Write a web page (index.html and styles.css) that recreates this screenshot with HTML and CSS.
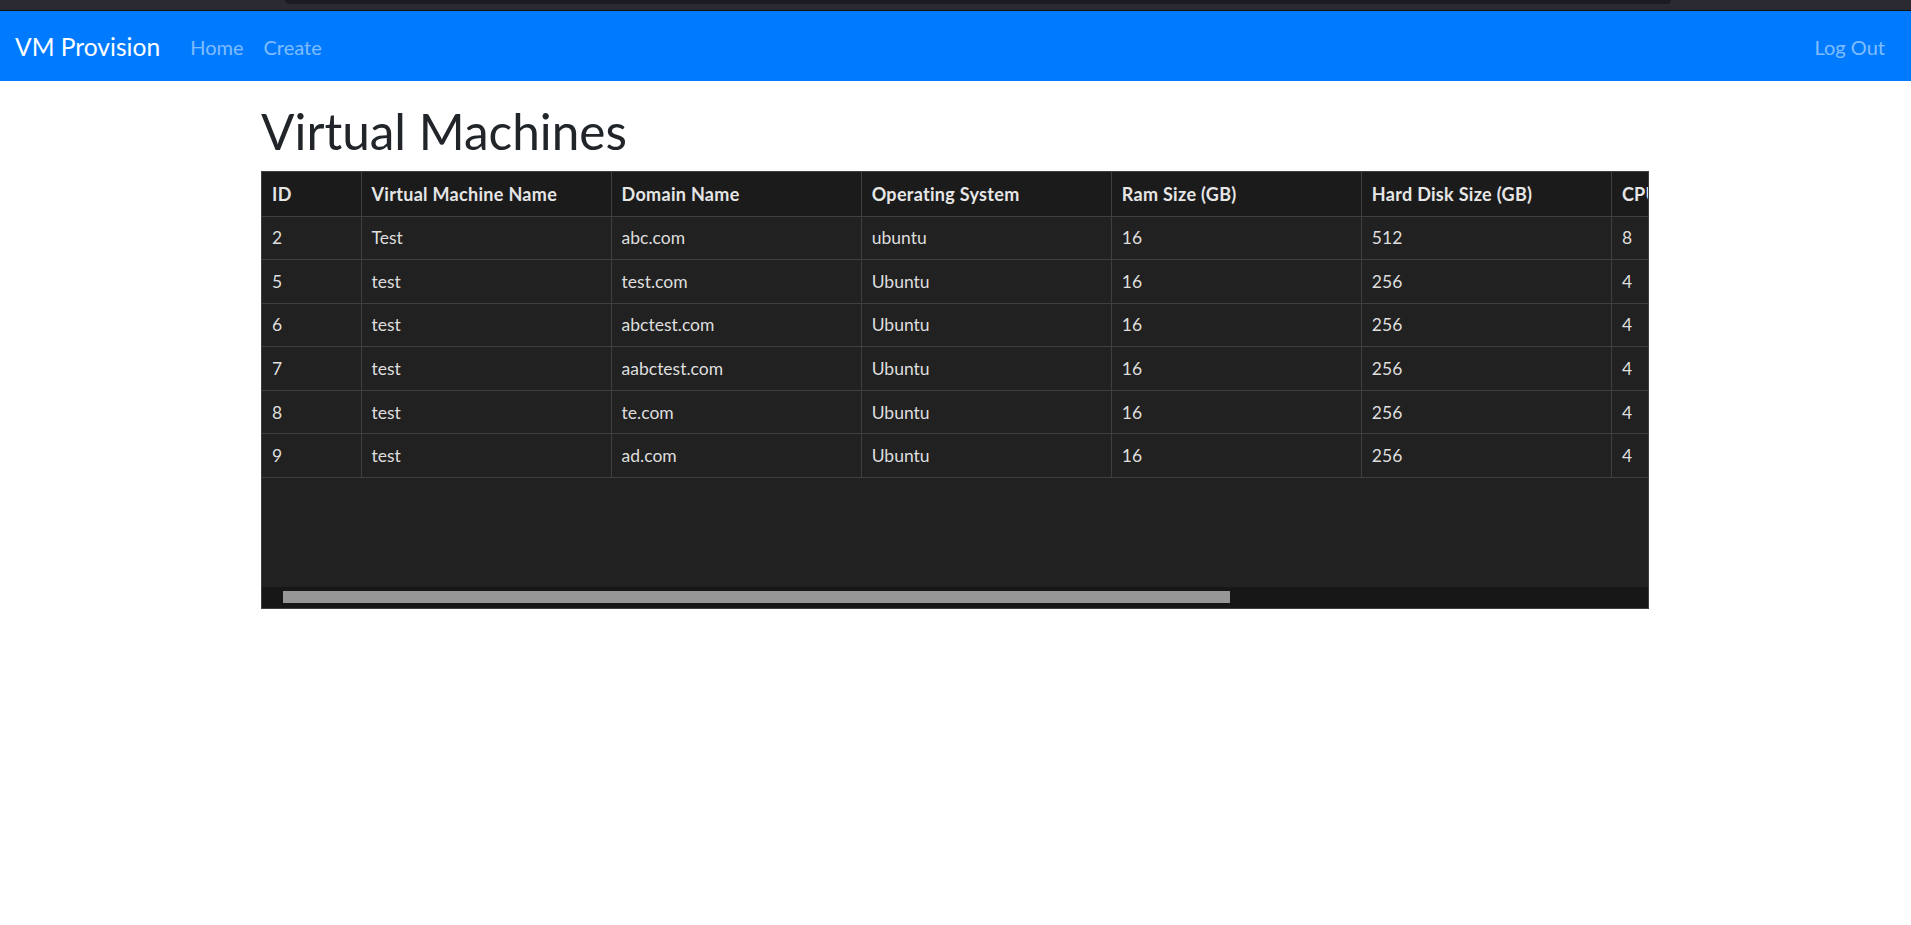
FILE: index.html
```html
<!DOCTYPE html>
<html lang="en">
<head>
<meta charset="utf-8">
<title>VM Provision</title>
<link rel="stylesheet" href="styles.css">
</head>
<body>
<div class="chrome"><div class="chrome-tab"></div></div>
<nav class="navbar">
  <a class="brand" href="#">VM Provision</a>
  <ul class="nav">
    <li><a class="nav-link" href="#">Home</a></li>
    <li><a class="nav-link" href="#">Create</a></li>
  </ul>
  <ul class="nav nav-right">
    <li><a class="nav-link" href="#">Log Out</a></li>
  </ul>
</nav>
<div class="page">
<main class="container">
  <h1 class="title">Virtual Machines</h1>
  <div class="table-wrap">
    <div class="table-view">
      <table class="vm-table">
        <colgroup>
          <col class="c-id"><col class="c-w"><col class="c-w"><col class="c-w"><col class="c-w"><col class="c-w"><col class="c-w">
        </colgroup>
        <thead>
          <tr><th>ID</th><th>Virtual Machine Name</th><th>Domain Name</th><th>Operating System</th><th>Ram Size (GB)</th><th>Hard Disk Size (GB)</th><th>CPU</th></tr>
        </thead>
        <tbody>
          <tr><td>2</td><td>Test</td><td>abc.com</td><td>ubuntu</td><td>16</td><td>512</td><td>8</td></tr>
          <tr><td>5</td><td>test</td><td>test.com</td><td>Ubuntu</td><td>16</td><td>256</td><td>4</td></tr>
          <tr><td>6</td><td>test</td><td>abctest.com</td><td>Ubuntu</td><td>16</td><td>256</td><td>4</td></tr>
          <tr><td>7</td><td>test</td><td>aabctest.com</td><td>Ubuntu</td><td>16</td><td>256</td><td>4</td></tr>
          <tr><td>8</td><td>test</td><td>te.com</td><td>Ubuntu</td><td>16</td><td>256</td><td>4</td></tr>
          <tr><td>9</td><td>test</td><td>ad.com</td><td>Ubuntu</td><td>16</td><td>256</td><td>4</td></tr>
        </tbody>
      </table>
    </div>
    <div class="scrollbar"><div class="thumb"></div></div>
  </div>
</main>
</div>
</body>
</html>
```

FILE: styles.css
```css
* { box-sizing: border-box; }
html, body { margin: 0; padding: 0; }
body {
  font-family: Lato, "Open Sans", "Noto Sans", sans-serif;
  font-size: 20px;
  line-height: 1.5;
  color: #212529;
  background: #fff;
}
.chrome {
  height: 11px;
  background: #2b2a33;
  border-bottom: 1px solid #111114;
  padding-left: 285px;
}
.chrome-tab {
  width: 1386px;
  height: 4px;
  background: #1c1b22;
  border-radius: 0 0 4px 4px;
}
.navbar {
  display: flex;
  align-items: center;
  height: 70px;
  background: #007bff;
  padding: 0 16px 0 15px;
}
.brand {
  color: #fff;
  text-decoration: none;
  font-size: 24.6px;
  line-height: 1.5;
  margin-right: 20px;
  padding-top: 2px;
}
.nav {
  list-style: none;
  margin: 0;
  padding: 0;
  display: flex;
  padding-top: 2px;
}
.nav-right { margin-left: auto; }
.nav-link {
  display: block;
  padding: 0 10px;
  color: rgba(255,255,255,.5);
  text-decoration: none;
  font-size: 20px;
}
.page {
  padding-right: 1px;
}
.container {
  width: 1388px;
  margin: 0 auto;
}
.title {
  font-size: 49.5px;
  font-weight: 400;
  line-height: 60px;
  margin: 20px 0 10px;
  color: #212529;
}
.table-wrap {
  border: 1px solid #3f3f3f;
  background: #212121;
}
.table-view {
  height: 415px;
  overflow: hidden;
}
.vm-table {
  border-collapse: collapse;
  table-layout: fixed;
  width: 1600px;
  font-size: 17.5px;
  color: #dedede;
}
.c-id { width: 99px; }
.c-w { width: 250px; }
.vm-table th, .vm-table td {
  text-align: left;
  padding: 1px 10px 0;
  border-right: 1px solid #3f3f3f;
  border-bottom: 1px solid #3f3f3f;
  vertical-align: middle;
  white-space: nowrap;
}
.vm-table th {
  height: 44px;
  background: #1b1b1b;
  font-size: 18px;
  letter-spacing: 0.3px;
  font-weight: 700;
  color: #e6e6e6;
}
.vm-table td {
  height: 43.6px;
  background: #212121;
}
.scrollbar {
  height: 21px;
  background: #171717;
  padding: 4px 0 0 21px;
}
.thumb {
  width: 947px;
  height: 12px;
  background: #979797;
}
```
